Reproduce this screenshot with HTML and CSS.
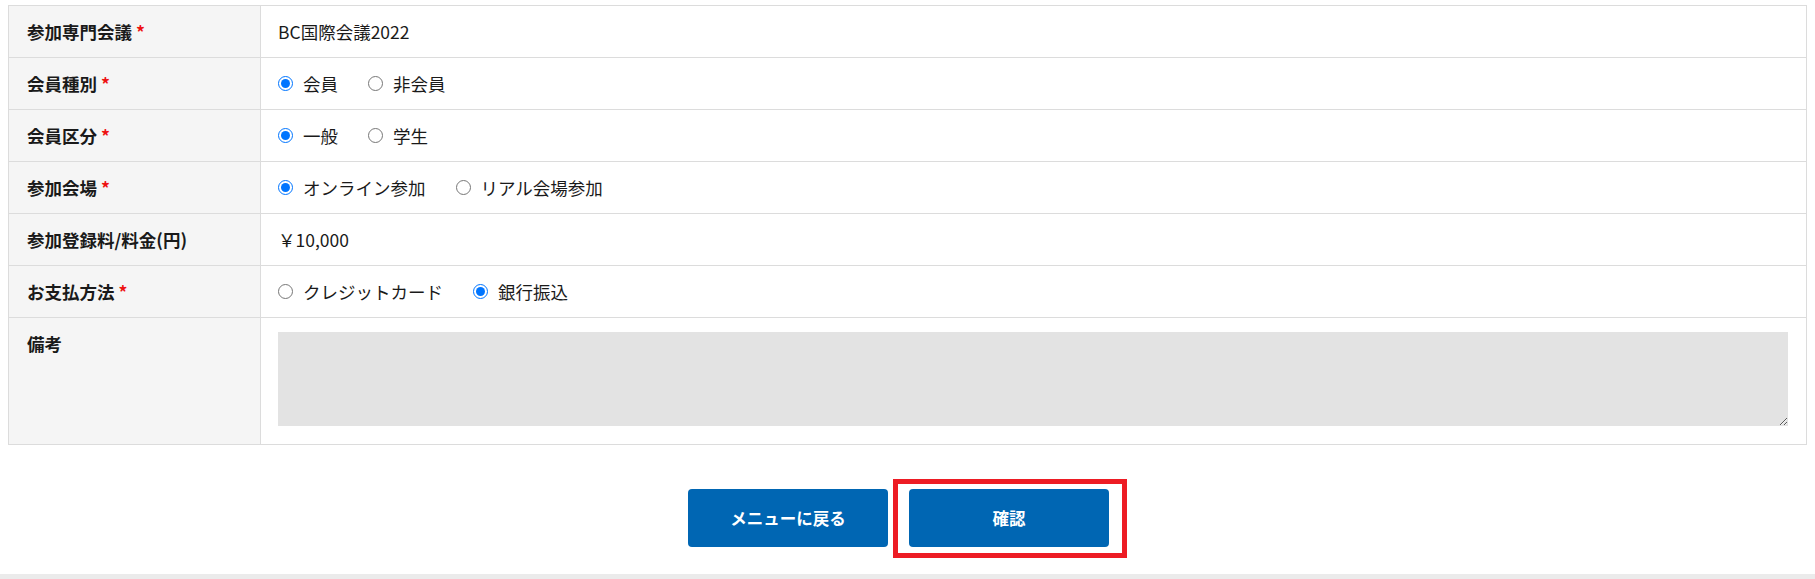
FILE: index.html
```html
<!DOCTYPE html>
<html lang="ja">
<head>
<meta charset="utf-8">
<title>参加申込</title>
<link rel="stylesheet" href="styles.css">
</head>
<body>
<form class="entry">
  <table class="form-table">
    <tr>
      <th>参加専門会議 <span class="req">*</span></th>
      <td>BC国際会議2022</td>
    </tr>
    <tr>
      <th>会員種別 <span class="req">*</span></th>
      <td>
        <div class="choices">
          <label class="choice"><input type="radio" name="kind" checked><span>会員</span></label>
          <label class="choice"><input type="radio" name="kind"><span>非会員</span></label>
        </div>
      </td>
    </tr>
    <tr>
      <th>会員区分 <span class="req">*</span></th>
      <td>
        <div class="choices">
          <label class="choice"><input type="radio" name="cls" checked><span>一般</span></label>
          <label class="choice"><input type="radio" name="cls"><span>学生</span></label>
        </div>
      </td>
    </tr>
    <tr>
      <th>参加会場 <span class="req">*</span></th>
      <td>
        <div class="choices">
          <label class="choice"><input type="radio" name="venue" checked><span>オンライン参加</span></label>
          <label class="choice"><input type="radio" name="venue"><span>リアル会場参加</span></label>
        </div>
      </td>
    </tr>
    <tr>
      <th>参加登録料/料金(円)</th>
      <td>￥10,000</td>
    </tr>
    <tr>
      <th>お支払方法 <span class="req">*</span></th>
      <td>
        <div class="choices">
          <label class="choice"><input type="radio" name="pay"><span>クレジットカード</span></label>
          <label class="choice"><input type="radio" name="pay" checked><span>銀行振込</span></label>
        </div>
      </td>
    </tr>
    <tr class="remarks">
      <th>備考</th>
      <td><textarea class="note"></textarea></td>
    </tr>
  </table>
  <div class="actions">
    <button type="button" class="btn">メニューに戻る</button>
    <div class="highlight-wrap">
      <button type="button" class="btn">確認</button>
      <span class="highlight"></span>
    </div>
  </div>
</form>
<div class="footer-strip"></div>
</body>
</html>
```

FILE: styles.css
```css
html, body {
  margin: 0;
  padding: 0;
  background: #ffffff;
}
body {
  padding: 5px 8px 0 8px;
  font-family: "Noto Sans CJK JP", "Noto Sans", sans-serif;
  font-size: 17.5px;
  color: #1a1a1a;
  overflow: hidden;
}
.form-table {
  width: 100%;
  border-collapse: collapse;
  border: 1px solid #dcdcdc;
}
.form-table th,
.form-table td {
  border: 1px solid #dcdcdc;
  padding: 13px 18px;
  line-height: 25px;
  height: 25px;
  text-align: left;
  vertical-align: middle;
}
.form-table th {
  width: 215px;
  background: #f5f5f5;
  font-weight: 700;
  white-space: nowrap;
}
.form-table td {
  font-weight: 400;
  padding-left: 17px;
}
.req {
  color: #ee1111;
}
.choices {
  display: flex;
  align-items: center;
  gap: 30px;
}
.choice {
  display: inline-flex;
  align-items: center;
  gap: 10px;
}
.choice input {
  margin: 0;
  width: 15px;
  height: 15px;
}
.remarks th {
  vertical-align: top;
}
.remarks td {
  padding-top: 14px;
  padding-bottom: 18px;
  height: auto;
}
.note {
  display: block;
  width: 100%;
  height: 94px;
  box-sizing: border-box;
  border: none;
  background: #e3e3e3;
  margin: 0;
}
.actions {
  display: flex;
  justify-content: center;
  gap: 21px;
  padding: 44px 18px 27px 0;
}
.btn {
  width: 200px;
  height: 58px;
  border: none;
  border-radius: 4px;
  background: #0066b3;
  color: #ffffff;
  font-family: "Noto Sans CJK JP", "Noto Sans", sans-serif;
  font-weight: 700;
  font-size: 16.5px;
}
.highlight-wrap {
  position: relative;
}
.highlight {
  position: absolute;
  left: -16px;
  top: -10px;
  right: -18px;
  bottom: -11px;
  border: 5px solid #ed1c24;
  pointer-events: none;
}
.footer-strip {
  height: 20px;
  margin: 0 -8px;
  background: #ebebeb;
}
```
